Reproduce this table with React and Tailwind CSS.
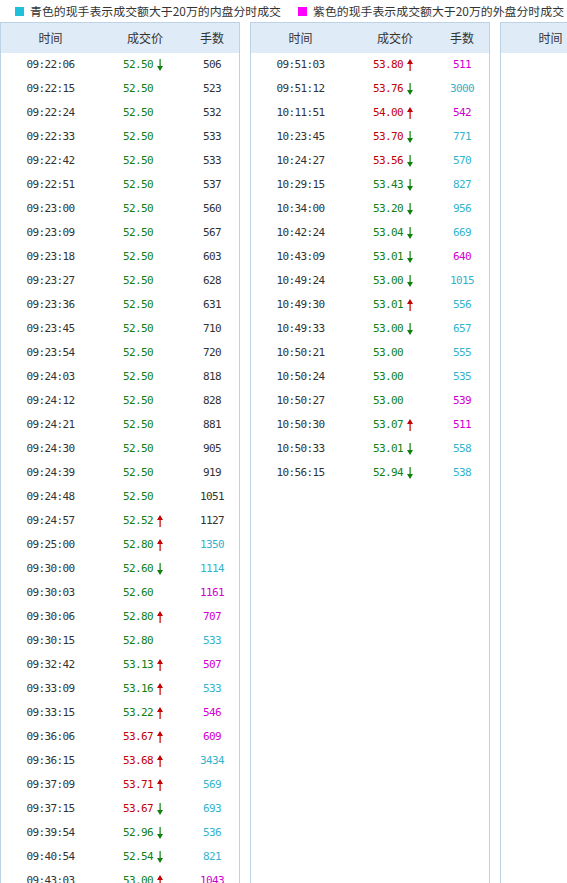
import React from "react";

const G = "#118011";
const R = "#c40000";
const C = "#33b3cc";
const M = "#d000d0";
const D = "#333333";

const p1 = [
  ["09:22:06", "52.50", "d", "506", D, G],
  ["09:22:15", "52.50", "", "523", D, G],
  ["09:22:24", "52.50", "", "532", D, G],
  ["09:22:33", "52.50", "", "533", D, G],
  ["09:22:42", "52.50", "", "533", D, G],
  ["09:22:51", "52.50", "", "537", D, G],
  ["09:23:00", "52.50", "", "560", D, G],
  ["09:23:09", "52.50", "", "567", D, G],
  ["09:23:18", "52.50", "", "603", D, G],
  ["09:23:27", "52.50", "", "628", D, G],
  ["09:23:36", "52.50", "", "631", D, G],
  ["09:23:45", "52.50", "", "710", D, G],
  ["09:23:54", "52.50", "", "720", D, G],
  ["09:24:03", "52.50", "", "818", D, G],
  ["09:24:12", "52.50", "", "828", D, G],
  ["09:24:21", "52.50", "", "881", D, G],
  ["09:24:30", "52.50", "", "905", D, G],
  ["09:24:39", "52.50", "", "919", D, G],
  ["09:24:48", "52.50", "", "1051", D, G],
  ["09:24:57", "52.52", "u", "1127", D, G],
  ["09:25:00", "52.80", "u", "1350", C, G],
  ["09:30:00", "52.60", "d", "1114", C, G],
  ["09:30:03", "52.60", "", "1161", M, G],
  ["09:30:06", "52.80", "u", "707", M, G],
  ["09:30:15", "52.80", "", "533", C, G],
  ["09:32:42", "53.13", "u", "507", M, G],
  ["09:33:09", "53.16", "u", "533", C, G],
  ["09:33:15", "53.22", "u", "546", M, G],
  ["09:36:06", "53.67", "u", "609", M, R],
  ["09:36:15", "53.68", "u", "3434", C, R],
  ["09:37:09", "53.71", "u", "569", C, R],
  ["09:37:15", "53.67", "d", "693", C, R],
  ["09:39:54", "52.96", "d", "536", C, G],
  ["09:40:54", "52.54", "d", "821", C, G],
  ["09:43:03", "53.00", "u", "1043", M, G],
  ["09:43:12", "53.00", "", "560", C, G],
];

const p2 = [
  ["09:51:03", "53.80", "u", "511", M, R],
  ["09:51:12", "53.76", "d", "3000", C, R],
  ["10:11:51", "54.00", "u", "542", M, R],
  ["10:23:45", "53.70", "d", "771", C, R],
  ["10:24:27", "53.56", "d", "570", C, R],
  ["10:29:15", "53.43", "d", "827", C, G],
  ["10:34:00", "53.20", "d", "956", C, G],
  ["10:42:24", "53.04", "d", "669", C, G],
  ["10:43:09", "53.01", "d", "640", M, G],
  ["10:49:24", "53.00", "d", "1015", C, G],
  ["10:49:30", "53.01", "u", "556", C, G],
  ["10:49:33", "53.00", "d", "657", C, G],
  ["10:50:21", "53.00", "", "555", C, G],
  ["10:50:24", "53.00", "", "535", C, G],
  ["10:50:27", "53.00", "", "539", M, G],
  ["10:50:30", "53.07", "u", "511", M, G],
  ["10:50:33", "53.01", "d", "558", C, G],
  ["10:56:15", "52.94", "d", "538", C, G],
];

function Arrow({ dir }) {
  if (dir === "u")
    return (
      <svg width="6" height="12" viewBox="0 0 6 12" className="ml-[4px] -mt-[1px] shrink-0">
        <polygon points="0,5 3,0 6,5" fill={R} />
        <rect x="2.5" y="3" width="1.2" height="9" fill={R} />
      </svg>
    );
  if (dir === "d")
    return (
      <svg width="6" height="12" viewBox="0 0 6 12" className="ml-[4px] -mt-[1px] shrink-0">
        <polygon points="0,7 3,12 6,7" fill={G} />
        <rect x="2.5" y="0" width="1.2" height="9" fill={G} />
      </svg>
    );
  return null;
}

const mono = "font-['DejaVu_Sans_Mono','Liberation_Mono',monospace] text-[11px] tracking-[-0.6px]";

function Panel({ rows }) {
  return (
    <div className="w-[240px] shrink-0 border border-[#bdd2e2] bg-white">
      <div className="flex h-[30px] items-center bg-[#dfebf6] text-[12px] text-[#333] font-['Noto_Sans_CJK_SC',sans-serif]">
        <div className="w-[99px] text-center">时间</div>
        <div className="w-[90px] text-center">成交价</div>
        <div className="w-[44px] text-center">手数</div>
      </div>
      {rows.map((r, i) => (
        <div key={i} className={`flex h-[24px] items-center pt-[1px] ${mono}`}>
          <div className="w-[99px] text-center text-[#333]">{r[0]}</div>
          <div className="flex w-[90px] items-center pl-[23px]" style={{ color: r[5] }}>
            <span>{r[1]}</span>
            <Arrow dir={r[2]} />
          </div>
          <div className="w-[44px] text-center" style={{ color: r[4] }}>
            {r[3]}
          </div>
        </div>
      ))}
    </div>
  );
}

export default function App() {
  return (
    <div className="h-[883px] w-[567px] overflow-hidden bg-white font-['Noto_Sans_CJK_SC',sans-serif]">
      <div className="flex h-[22px] items-center text-[11.9px] leading-none text-[#333]">
        <span className="ml-[15px] h-[9px] w-[9px] shrink-0 bg-[#1ec1d9]" />
        <span className="ml-[6px] whitespace-nowrap">青色的现手表示成交额大于20万的内盘分时成交</span>
        <span className="ml-[17px] h-[9px] w-[9px] shrink-0 bg-[#ff00ff]" />
        <span className="ml-[6px] whitespace-nowrap">紫色的现手表示成交额大于20万的外盘分时成交</span>
      </div>
      <div className="flex h-[1000px] items-stretch gap-[10px]">
        <Panel rows={p1} />
        <Panel rows={p2} />
        <Panel rows={[]} />
      </div>
    </div>
  );
}
